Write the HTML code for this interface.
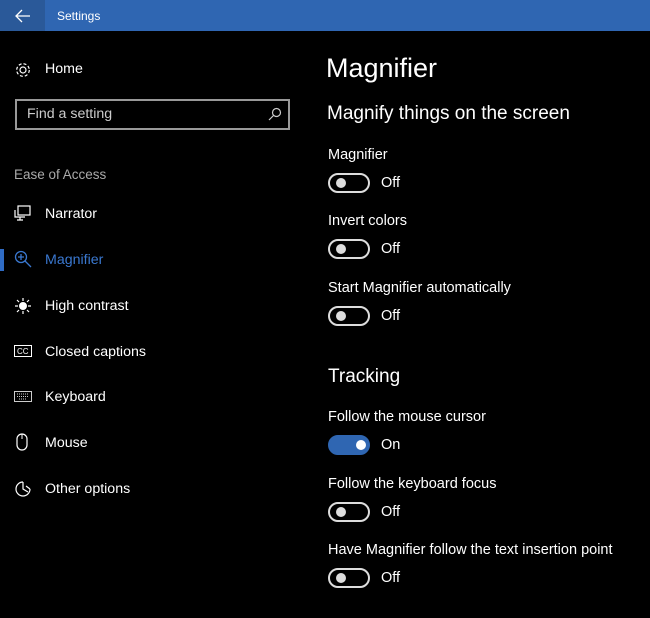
<!DOCTYPE html>
<html><head><style>
*{margin:0;padding:0;box-sizing:border-box}
body{width:650px;height:618px;background:#000;color:#fff;font-family:"Segoe UI","Liberation Sans",sans-serif;position:relative;overflow:hidden}
.t{position:absolute;white-space:nowrap}
.bar{position:absolute;left:0;top:0;width:650px;height:31px;background:#2f66b2}
.back{position:absolute;left:0;top:0;width:45px;height:31px;background:#2a5999}
.ic{position:absolute}
.tg{position:absolute;left:328px;width:42px;height:20px;border:2px solid #ddd;border-radius:10px}
.tg::after{content:"";position:absolute;left:6px;top:3px;width:10px;height:10px;border-radius:5px;background:#ddd}
.tg.on{background:#2f66b2;border-color:#2f66b2}
.tg.on::after{left:26px;background:#fff}
.lab{font-size:14.5px}
.s{font-size:14.2px}
</style></head><body>
<div class="bar"></div><div class="back"></div>
<svg class="ic" style="left:15px;top:9px" width="16" height="14"><path d="M1 7H15M7 1L1 7L7 13" stroke="#fff" stroke-width="1.3" fill="none"/></svg>
<div class="t" style="left:57px;top:9px;font-size:12px">Settings</div>

<svg class="ic" style="left:14px;top:61px" width="18" height="18" viewBox="0 0 18 18"><circle cx="9" cy="9" r="3" stroke="#fff" fill="none" stroke-width="1.2"/><circle cx="9" cy="9" r="6.3" stroke="#fff" fill="none" stroke-width="1.2" stroke-dasharray="3 2"/></svg>
<div class="t s" style="left:45px;top:61px">Home</div>
<div style="position:absolute;left:15px;top:99px;width:275px;height:31px;border:2px solid #999"></div>
<div class="t s" style="left:27px;top:106px;color:#ccc">Find a setting</div>
<svg class="ic" style="left:268px;top:107px" width="14" height="14"><circle cx="8.5" cy="5.5" r="4" stroke="#ccc" fill="none" stroke-width="1.2"/><path d="M5.5 8.5L1 13" stroke="#ccc" stroke-width="1.2"/></svg>
<div class="t" style="left:14px;top:167px;font-size:13.5px;color:#aaa">Ease of Access</div>

<svg class="ic" style="left:14px;top:205px" width="18" height="16"><rect x="4" y="1" width="12" height="9" stroke="#fff" fill="none" stroke-width="1.2"/><path d="M1 5V12H11M6 12V15M3 15H9" stroke="#fff" fill="none" stroke-width="1.2"/></svg>
<div class="t s" style="left:45px;top:206px">Narrator</div>
<div style="position:absolute;left:0;top:249px;width:4px;height:22px;background:#2f6bc4"></div>
<svg class="ic" style="left:14px;top:250px" width="18" height="18"><circle cx="7" cy="7" r="5.5" stroke="#3a78d0" fill="none" stroke-width="1.3"/><path d="M11 11L17 17M4 7H10M7 4V10" stroke="#3a78d0" stroke-width="1.3"/></svg>
<div class="t s" style="left:45px;top:252px;color:#3a78d0">Magnifier</div>
<svg class="ic" style="left:14px;top:297px" width="18" height="18"><circle cx="9" cy="9" r="3.5" stroke="#fff" fill="#fff" stroke-width="1"/><path d="M9 1V4M9 14V17M1 9H4M14 9H17M3 3L5 5M13 13L15 15M3 15L5 13M13 5L15 3" stroke="#fff" stroke-width="1.2"/></svg>
<div class="t s" style="left:45px;top:298px">High contrast</div>
<svg class="ic" style="left:14px;top:345px" width="18" height="12"><rect x="0.5" y="0.5" width="17" height="11" stroke="#fff" fill="none"/><text x="3" y="9" font-size="8" fill="#fff" font-family="Liberation Sans">CC</text></svg>
<div class="t s" style="left:45px;top:344px">Closed captions</div>
<svg class="ic" style="left:14px;top:391px" width="18" height="11"><rect x="0.5" y="0.5" width="17" height="10" stroke="#ccc" fill="none"/><path d="M3 3H15M3 5.5H15M5 8H13" stroke="#ccc" stroke-dasharray="1 1"/></svg>
<div class="t s" style="left:45px;top:389px">Keyboard</div>
<svg class="ic" style="left:16px;top:433px" width="12" height="18"><rect x="1" y="1" width="10" height="16" rx="5" stroke="#fff" fill="none" stroke-width="1.2"/><path d="M6 1V6" stroke="#fff"/></svg>
<div class="t s" style="left:45px;top:435px">Mouse</div>
<svg class="ic" style="left:14px;top:480px" width="18" height="18"><path d="M9 2A7 7 0 1 0 16 9M9 2V9L14 12M12 6L16 9" stroke="#fff" fill="none" stroke-width="1.2"/></svg>
<div class="t s" style="left:45px;top:481px">Other options</div>

<div class="t" style="left:326px;top:53px;font-size:27px;font-weight:300">Magnifier</div>
<div class="t" style="left:327px;top:103px;font-size:19px">Magnify things on the screen</div>
<div class="t lab" style="left:328px;top:147px">Magnifier</div>
<div class="tg" style="top:173px"></div><div class="t lab" style="left:381px;top:175px">Off</div>
<div class="t lab" style="left:328px;top:213px">Invert colors</div>
<div class="tg" style="top:239px"></div><div class="t lab" style="left:381px;top:241px">Off</div>
<div class="t lab" style="left:328px;top:280px">Start Magnifier automatically</div>
<div class="tg" style="top:306px"></div><div class="t lab" style="left:381px;top:308px">Off</div>
<div class="t" style="left:328px;top:366px;font-size:19px">Tracking</div>
<div class="t lab" style="left:328px;top:409px">Follow the mouse cursor</div>
<div class="tg on" style="top:435px"></div><div class="t lab" style="left:381px;top:437px">On</div>
<div class="t lab" style="left:328px;top:476px">Follow the keyboard focus</div>
<div class="tg" style="top:502px"></div><div class="t lab" style="left:381px;top:504px">Off</div>
<div class="t lab" style="left:328px;top:542px">Have Magnifier follow the text insertion point</div>
<div class="tg" style="top:568px"></div><div class="t lab" style="left:381px;top:570px">Off</div>
</body></html>
